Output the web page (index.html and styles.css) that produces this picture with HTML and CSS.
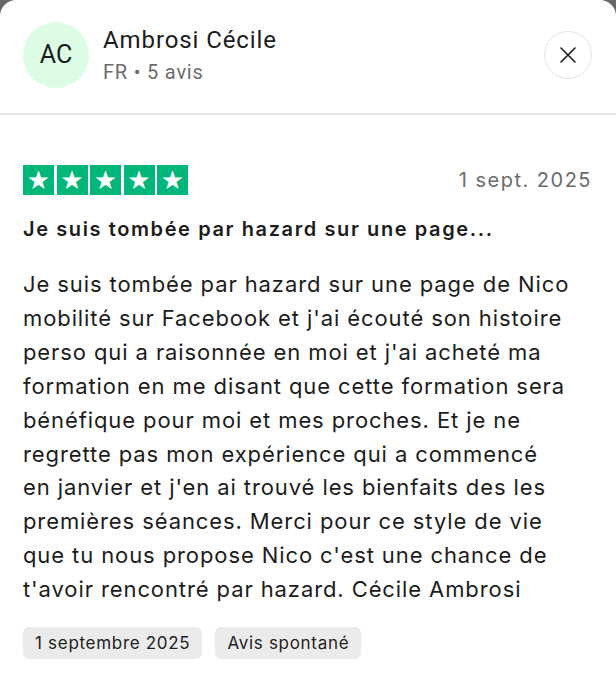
FILE: index.html
```html
<!DOCTYPE html>
<html lang="fr">
<head>
    <meta charset="UTF-8" />
    <title>Avis - Ambrosi Cécile</title>
    <link rel="stylesheet" href="styles.css">
</head>
<body>
    <div class="card">
        <div class="card-header">
            <div class="avatar">AC</div>
            <div class="reviewer">
                <div class="reviewer-name">Ambrosi Cécile</div>
                <div class="reviewer-meta">FR • 5 avis</div>
            </div>
            <button class="close-btn" aria-label="Fermer">
                <svg width="18" height="18" viewBox="0 0 18 18">
                    <path d="M2 2 L16 16 M16 2 L2 16" stroke="#1a1a1a" stroke-width="1.6" stroke-linecap="round" />
                </svg>
            </button>
        </div>

        <div class="review">
            <div class="review-top">
                <div class="stars">
                    <span class="star">★</span>
                    <span class="star">★</span>
                    <span class="star">★</span>
                    <span class="star">★</span>
                    <span class="star">★</span>
                </div>
                <div class="review-date">1 sept. 2025</div>
            </div>

            <h3 class="review-title">Je suis tombée par hazard sur une page...</h3>

            <p class="review-text">Je suis tombée par hazard sur une page de Nico mobilité sur Facebook et j'ai écouté son histoire perso qui a raisonnée en moi et j'ai acheté ma formation en me disant que cette formation sera bénéfique pour moi et mes proches. Et je ne regrette pas mon expérience qui a commencé<br>en janvier et j'en ai trouvé les bienfaits des les premières séances. Merci pour ce style de vie que tu nous propose Nico c'est une chance de t'avoir rencontré par hazard. Cécile Ambrosi</p>

            <div class="tags">
                <span class="tag">1 septembre 2025</span>
                <span class="tag">Avis spontané</span>
            </div>
        </div>
    </div>
</body>
</html>
```

FILE: styles.css
```css
body {
    margin: 0;
    background-color: #666;
    font-family: Inter, "Noto Sans", sans-serif;
    color: #1c1c1c;
}

.card {
    background-color: #fff;
    border-radius: 16px 16px 0 0;
    height: 680px;
}

.card-header {
    display: flex;
    align-items: center;
    padding: 22px 24px 26px 23px;
    height: 115px;
    box-sizing: border-box;
    border-bottom: 2px solid #e8e4e4;
}

.avatar {
    width: 66px;
    height: 66px;
    border-radius: 50%;
    background-color: #dcfce5;
    display: flex;
    align-items: center;
    justify-content: center;
    font-family: Roboto, "Liberation Sans", sans-serif;
    font-size: 25px;
    color: #1c1c1c;
}

.reviewer {
    flex: 1;
    margin-left: 14px;
    font-family: Roboto, "Liberation Sans", sans-serif;
}

.reviewer-name {
    font-size: 24px;
    letter-spacing: 0.9px;
    color: #1c1c1c;
}

.reviewer-meta {
    margin-top: 6px;
    font-size: 20px;
    letter-spacing: 0.8px;
    color: #6b6b6b;
}

/* round close button */
.close-btn {
    width: 48px;
    height: 48px;
    border-radius: 50%;
    border: 1px solid #e3e3e3;
    background-color: #fff;
    display: flex;
    align-items: center;
    justify-content: center;
    padding: 0;
    cursor: pointer;
}

.review {
    padding: 50px 24px 0 23px;
}

.review-top {
    display: flex;
    align-items: center;
    justify-content: space-between;
}

.stars {
    display: flex;
    gap: 2.5px;
}

.star {
    width: 31px;
    height: 30px;
    background-color: #00b67a;
    color: #fff;
    font-size: 26px;
    line-height: 30px;
    text-align: center;
    font-family: "DejaVu Sans", sans-serif;
}

.review-date {
    font-size: 20px;
    letter-spacing: 1.5px;
    color: #6b6b6b;
}

.review-title {
    margin: 22px 0 0;
    font-size: 20px;
    font-weight: 600;
    letter-spacing: 1.6px;
    color: #1c1c1c;
}

.review-text {
    margin: 27px 14px 0 0;
    font-size: 22px;
    line-height: 33.9px;
    letter-spacing: 0.9px;
    color: #1c1c1c;
}

.tags {
    display: flex;
    gap: 13px;
    margin-top: 20px;
}

.tag {
    background-color: #ebebeb;
    border-radius: 6px;
    padding: 6px 12px;
    font-size: 17px;
    letter-spacing: 0.7px;
    color: #222;
}
```
